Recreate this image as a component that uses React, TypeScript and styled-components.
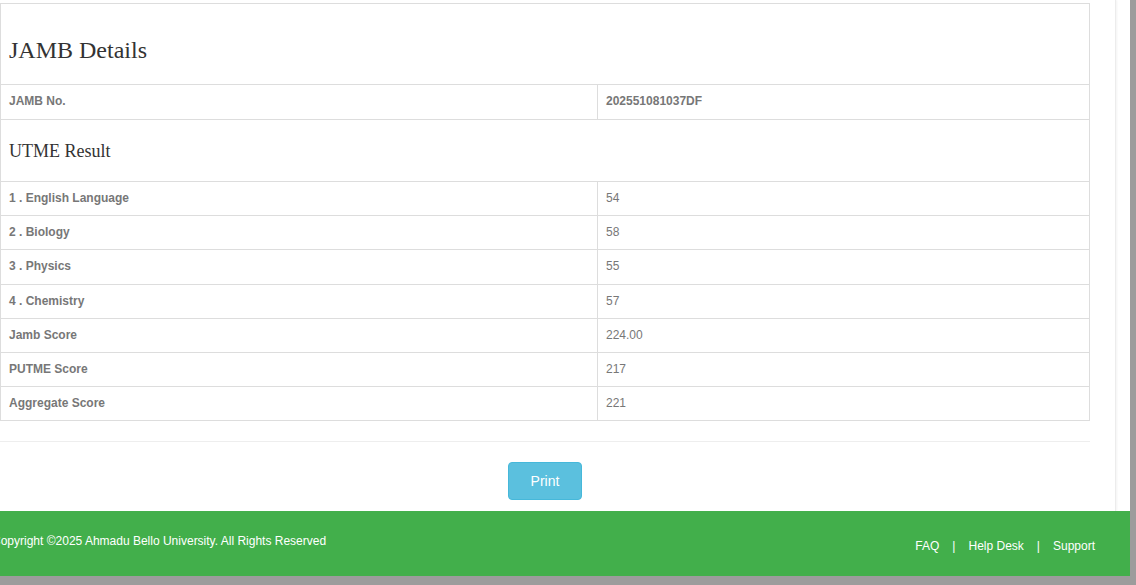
import React from 'react'
import styled, { createGlobalStyle } from 'styled-components'

const GlobalStyle = createGlobalStyle`
  html, body {
    margin: 0;
    padding: 0;
  }
  body {
    background: #9c9c9c;
    font-family: "Liberation Sans", Arial, Helvetica, sans-serif;
    font-size: 12px;
    color: #333;
    overflow: hidden;
  }
`

const Page = styled.div`
  width: 1130px;
  background: #fff;
`

const Content = styled.div`
  width: 1115px;
  padding-top: 3px;
  padding-bottom: 11px;
  border-right: 1px solid #ececec;
  box-shadow: 1px 0 2px rgba(0, 0, 0, 0.05);
`

const Table = styled.table`
  width: 1090px;
  border-collapse: collapse;
  border-spacing: 0;
  table-layout: fixed;
`

const Cell = styled.td<{ $strong?: boolean; $tall?: boolean }>`
  border: 1px solid #ddd;
  padding: ${p => (p.$tall ? '8px 8px 9px' : '8px')};
  line-height: 1.42857;
  font-size: 12px;
  color: #777;
  font-weight: ${p => (p.$strong ? 'bold' : 'normal')};
  vertical-align: top;
`

const TitleCell = styled.td<{ $size: 'large' | 'small' }>`
  border: 1px solid #ddd;
  padding: ${p => (p.$size === 'large' ? '33px 8px 21px' : '21px 8px 20px')};
  line-height: ${p => (p.$size === 'large' ? '26px' : '20px')};
  font-family: "Liberation Serif", "Times New Roman", serif;
  font-size: ${p => (p.$size === 'large' ? '24px' : '18px')};
  font-weight: normal;
  color: #333;
`

const Divider = styled.hr`
  width: 1090px;
  margin: 20px 0;
  border: 0;
  border-top: 1px solid #eee;
  box-sizing: border-box;
`

const ButtonRow = styled.div`
  width: 1090px;
  display: flex;
  justify-content: center;
`

const PrintButton = styled.button`
  font-family: "Liberation Sans", Arial, sans-serif;
  font-size: 14px;
  line-height: 20px;
  padding: 8px 22px;
  color: #fff;
  background: #5bc0de;
  border: 1px solid #46b8da;
  border-radius: 4px;
  cursor: pointer;
`

const Footer = styled.footer`
  height: 65px;
  background: #42af4b;
  color: #fff;
  display: flex;
  justify-content: space-between;
  align-items: flex-start;
  padding-right: 35px;
  box-sizing: border-box;
  overflow: hidden;
`

const Copy = styled.div`
  margin-top: 22px;
  margin-left: -8px;
  line-height: 17px;
  white-space: nowrap;
`

const Links = styled.nav`
  margin-top: 27px;
  display: flex;
  gap: 13px;
  line-height: 17px;
`

const Link = styled.a`
  color: #fff;
  text-decoration: none;
`

const subjects = [
  ['1 . English Language', '54'],
  ['2 . Biology', '58'],
  ['3 . Physics', '55'],
  ['4 . Chemistry', '57'],
  ['Jamb Score', '224.00'],
  ['PUTME Score', '217'],
  ['Aggregate Score', '221'],
]

export default function App() {
  return (
    <>
      <GlobalStyle />
      <Page>
        <Content>
          <Table>
            <colgroup>
              <col style={{ width: 597 }} />
              <col />
            </colgroup>
            <tbody>
              <tr>
                <TitleCell colSpan={2} $size="large">JAMB Details</TitleCell>
              </tr>
              <tr>
                <Cell $strong $tall>JAMB No.</Cell>
                <Cell $strong $tall>202551081037DF</Cell>
              </tr>
              <tr>
                <TitleCell colSpan={2} $size="small">UTME Result</TitleCell>
              </tr>
              {subjects.map(([label, value]) => (
                <tr key={label}>
                  <Cell $strong>{label}</Cell>
                  <Cell>{value}</Cell>
                </tr>
              ))}
            </tbody>
          </Table>
          <Divider />
          <ButtonRow>
            <PrintButton>Print</PrintButton>
          </ButtonRow>
        </Content>
        <Footer>
          <Copy>Copyright ©2025 Ahmadu Bello University. All Rights Reserved</Copy>
          <Links>
            <Link href="#">FAQ</Link>
            <span>|</span>
            <Link href="#">Help Desk</Link>
            <span>|</span>
            <Link href="#">Support</Link>
          </Links>
        </Footer>
      </Page>
    </>
  )
}
